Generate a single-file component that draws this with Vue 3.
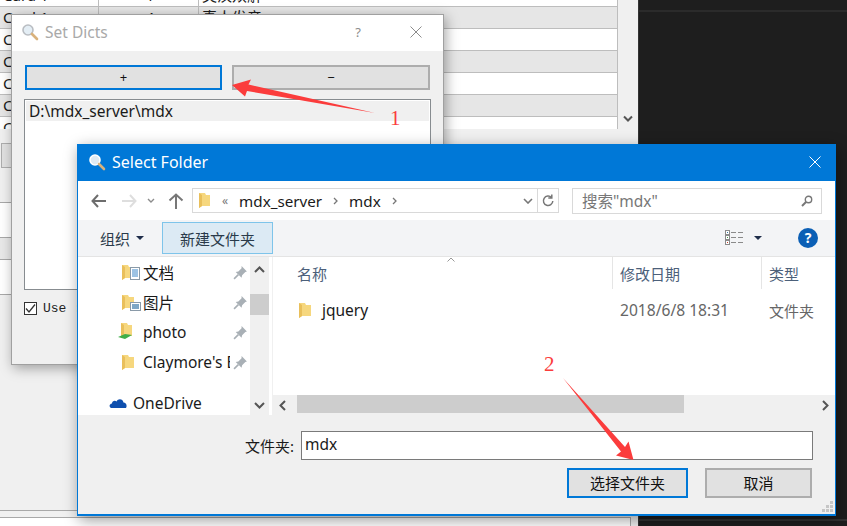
<template>
  <div class="desktop">
    <!-- app behind the dialogs -->
    <div class="app-panel">
      <div class="card-table">
        <div v-for="(row, i) in cardRows" :key="i" class="card-row">
          <span class="cell first">{{ row[0] }}</span>
          <span class="cell second">{{ row[1] }}</span>
          <span class="cell">{{ row[2] }}</span>
        </div>
        <div class="table-scroll">
          <svg class="scroll-down" width="10" height="7" viewBox="0 0 10 7"><path d="M1 1.5 5 5.5 9 1.5" fill="none" stroke="#555" stroke-width="2" /></svg>
        </div>
      </div>
      <div class="back-button"></div>
      <div class="back-list">
        <div class="back-row"></div>
        <div class="back-row grey"></div>
        <div class="back-row"></div>
      </div>
      <div class="back-footer">
        <div class="back-box"></div>
      </div>
    </div>
    <div class="dark-panel">
      <div class="dark-line top"></div>
      <div class="dark-line bottom"></div>
    </div>

    <!-- Set Dicts dialog -->
    <section class="dicts-window">
      <header class="dicts-title">
        <svg class="lens" width="18" height="18" viewBox="0 0 18 18">
          <circle cx="7" cy="7" r="5" fill="#e4eef5" stroke="#b9bdc2" stroke-width="1.6" />
          <path d="M11 11 16 16" stroke="#d9b27c" stroke-width="2.6" stroke-linecap="round" />
        </svg>
        <span class="dicts-name">Set Dicts</span>
        <span class="help-mark">?</span>
        <svg width="12" height="12" viewBox="0 0 12 12"><path d="M.5.5 11.5 11.5M11.5.5 .5 11.5" stroke="#8c8c8c" fill="none" /></svg>
      </header>
      <div class="dicts-body">
        <div class="dicts-buttons">
          <button class="flat-btn focused">+</button>
          <button class="flat-btn">−</button>
        </div>
        <div class="dicts-list">
          <div class="dicts-item">D:\mdx_server\mdx</div>
        </div>
        <div class="use-row">
          <span class="checkbox">
            <svg width="11" height="11" viewBox="0 0 11 11"><path d="M1 5.5 4 9 10 1.5" fill="none" stroke="#333" stroke-width="1.3" /></svg>
          </span>
          <span class="use-text">Use :</span>
        </div>
      </div>
    </section>

    <!-- Select Folder dialog -->
    <section class="folder-window">
      <header class="folder-title">
        <svg class="lens" width="18" height="18" viewBox="0 0 18 18">
          <circle cx="7" cy="7" r="5" fill="#dfeaf3" stroke="#fff" stroke-width="1.6" />
          <path d="M11 11 16 16" stroke="#d9b27c" stroke-width="2.6" stroke-linecap="round" />
        </svg>
        <span class="folder-name">Select Folder</span>
        <svg class="folder-close" width="12" height="12" viewBox="0 0 12 12"><path d="M.5.5 11.5 11.5M11.5.5 .5 11.5" stroke="#fff" fill="none" /></svg>
      </header>

      <div class="nav-row">
        <svg width="16" height="14" viewBox="0 0 16 14"><path d="M7 1 1.5 7 7 13M2 7H15" fill="none" stroke="#6d6d6d" stroke-width="2" /></svg>
        <svg class="nav-forward" width="16" height="14" viewBox="0 0 16 14"><path d="M9 1 14.5 7 9 13M14 7H1" fill="none" stroke="#dedede" stroke-width="2" /></svg>
        <svg class="nav-drop" width="8" height="5" viewBox="0 0 8 5"><path d="M1 1 4 4 7 1" fill="none" stroke="#8c8c8c" stroke-width="1.4" /></svg>
        <svg class="nav-up" width="16" height="16" viewBox="0 0 16 16"><path d="M1.5 7.5 8 1.5 14.5 7.5M8 2V16" fill="none" stroke="#777" stroke-width="2" /></svg>
        <div class="address">
          <svg class="folder-icon" width="13" height="17" viewBox="0 0 13 17"><path d="M1 1H7L8 3H12V14H4L1 16Z" fill="#f6d77e" /><path d="M1 1V16L4 14V3Z" fill="#e9bf5b" /></svg>
          <span class="crumb-more">«</span>
          <span class="crumb">mdx_server</span>
          <svg class="crumb-arrow" width="5" height="8" viewBox="0 0 5 8"><path d="M1 1 4 4 1 7" fill="none" stroke="#777" stroke-width="1.3" /></svg>
          <span class="crumb">mdx</span>
          <svg class="crumb-arrow" width="5" height="8" viewBox="0 0 5 8"><path d="M1 1 4 4 1 7" fill="none" stroke="#777" stroke-width="1.3" /></svg>
          <span class="spring"></span>
          <svg class="addr-drop" width="10" height="6" viewBox="0 0 10 6"><path d="M1 1 5 5 9 1" fill="none" stroke="#777" stroke-width="1.6" /></svg>
          <span class="refresh">
            <svg width="12" height="13" viewBox="0 0 12 13"><path d="M9.5 3.5A4.7 4.7 0 1 0 10.8 7M9.8 .5V4H6.3" fill="none" stroke="#777" stroke-width="1.5" /></svg>
          </span>
        </div>
        <div class="search">
          <span>搜索"mdx"</span>
          <svg width="12" height="12" viewBox="0 0 12 12"><circle cx="7.5" cy="4.5" r="3.2" fill="none" stroke="#777" stroke-width="1.4" /><path d="M5 7 1 11" stroke="#777" stroke-width="2" /></svg>
        </div>
      </div>

      <div class="tool-row">
        <span class="organize">组织</span>
        <span class="caret"></span>
        <span class="new-folder">新建文件夹</span>
        <span class="spring"></span>
        <svg class="view-icon" width="18" height="16" viewBox="0 0 18 16">
          <rect x=".5" y=".5" width="4" height="4" fill="#fff" stroke="#8a8a8a" />
          <rect x=".5" y="5.5" width="4" height="4" fill="#fff" stroke="#8a8a8a" />
          <rect x=".5" y="10.5" width="4" height="4" fill="#fff" stroke="#8a8a8a" />
          <rect x="2" y="2" width="1" height="1" fill="#3a7ca8" />
          <rect x="2" y="7" width="1" height="1" fill="#3f9a4b" />
          <rect x="2" y="12" width="1" height="1" fill="#c8402c" />
          <path d="M6 2.5H11M13 2.5H18M6 7.5H11M13 7.5H18M6 12.5H11M13 12.5H18" stroke="#8a8a8a" />
        </svg>
        <span class="caret view-caret"></span>
        <span class="help-circle">?</span>
      </div>

      <div class="browser">
        <div class="side-tree">
          <div v-for="item in sideItems" :key="item.name" class="side-item">
            <svg v-if="item.kind !== 'photo'" class="side-folder" width="14" height="17" viewBox="0 0 14 17"><path d="M1 1H7L8 3H13V14H4L1 16Z" fill="#f6d77e" /><path d="M1 1V16L4 14V3Z" fill="#e9bf5b" /></svg>
            <svg v-else class="side-folder shared" width="18" height="20" viewBox="0 0 18 20"><path d="M4 1H10L11 3H15V14H7L4 16Z" fill="#f6d77e" /><path d="M4 1V16L7 14V3Z" fill="#e9bf5b" /><path d="M1 15 8 12 15 13 8 17Z" fill="#3fae49" /></svg>
            <svg v-if="item.kind === 'docs'" class="overlay" width="10" height="13" viewBox="0 0 10 13"><rect x=".5" y=".5" width="9" height="12" fill="#fff" stroke="#8a9aa8" /><path d="M2 3H8M2 5H8M2 7H8M2 9H8" stroke="#3a86c8" /></svg>
            <svg v-if="item.kind === 'pics'" class="overlay pics" width="11" height="9" viewBox="0 0 11 9"><rect x=".5" y=".5" width="10" height="8" fill="#fff" stroke="#8a9aa8" /><rect x="2" y="2" width="7" height="5" fill="#7fa7c6" /></svg>
            <span class="side-label">{{ item.name }}</span>
            <svg class="pin" width="15" height="15" viewBox="0 0 14 14"><path d="M8 1 13 6 11.5 6.5 8.5 9.5 8 12 2.5 6.5 5 6 8 3Z" fill="#a9b0b6" /><path d="M5 9 1 13" stroke="#a9b0b6" stroke-width="1.5" /></svg>
          </div>
          <div class="side-onedrive">
            <svg width="18" height="12" viewBox="0 0 18 12"><path d="M2 11C0 10 0 7 3 6.5 3 4 6 3 7.5 4.5 9 1 14 1.5 14.5 5.5 17 5.5 18.5 8.5 17 11Z" fill="#0f4fae" /></svg>
            <span>OneDrive</span>
          </div>
        </div>
        <div class="side-scroll">
          <svg width="11" height="7" viewBox="0 0 11 7"><path d="M1 6 5.5 1.5 10 6" fill="none" stroke="#555" stroke-width="2" /></svg>
          <div class="side-thumb"></div>
          <span class="spring"></span>
          <svg width="11" height="7" viewBox="0 0 11 7"><path d="M1 1 5.5 5.5 10 1" fill="none" stroke="#555" stroke-width="2" /></svg>
        </div>
        <div class="file-pane">
          <div class="file-head">
            <span class="col-name">名称<svg class="sort-up" width="8" height="5" viewBox="0 0 8 5"><path d="M.5 4.5 4 1 7.5 4.5" fill="none" stroke="#999" /></svg></span>
            <span class="col-date">修改日期</span>
            <span class="col-type">类型</span>
          </div>
          <div class="file-row">
            <span class="col-name file-name">
              <svg width="14" height="17" viewBox="0 0 14 17"><path d="M1 1H7L8 3H13V14H4L1 16Z" fill="#f6d77e" /><path d="M1 1V16L4 14V3Z" fill="#e9bf5b" /></svg>
              jquery
            </span>
            <span class="col-date muted">2018/6/8 18:31</span>
            <span class="col-type muted">文件夹</span>
          </div>
          <span class="spring"></span>
          <div class="h-scroll">
            <svg width="7" height="11" viewBox="0 0 7 11"><path d="M6 1 1.5 5.5 6 10" fill="none" stroke="#555" stroke-width="2" /></svg>
            <div class="h-thumb"></div>
            <span class="spring"></span>
            <svg width="7" height="11" viewBox="0 0 7 11"><path d="M1 1 5.5 5.5 1 10" fill="none" stroke="#555" stroke-width="2" /></svg>
          </div>
        </div>
      </div>

      <footer class="folder-footer">
        <div class="name-row">
          <label>文件夹:</label>
          <div class="name-input">mdx</div>
        </div>
        <div class="action-row">
          <button class="flat-btn focused choose">选择文件夹</button>
          <button class="flat-btn cancel">取消</button>
        </div>
        <svg class="grip" width="11" height="11" viewBox="0 0 11 11">
          <path d="M8 0h3v3H8zM4 4h3v3H4zM8 4h3v3H8zM0 8h3v3H0zM4 8h3v3H4zM8 8h3v3H8z" fill="#c6c6c6" />
        </svg>
      </footer>
    </section>

    <!-- red annotations -->
    <svg class="marks" width="847" height="526" viewBox="0 0 847 526">
      <path d="M232 85 251 79.5 248.5 84.5 375 113 247 91 245 96.5Z" fill="#fb3c3c" />
      <path d="M563 378 625 447 628.5 441.5 633.5 460 616 455.5 621 451.5Z" fill="#fb3c3c" />
      <text x="390" y="125" class="mark-num">1</text>
      <text x="544" y="371" class="mark-num">2</text>
    </svg>
  </div>
</template>

<script setup>
const cardRows = [
  ['Card 1', '1', '英汉双解'],
  ['Card 1', '4', '真人发音'],
  ['Card', '', ''],
  ['Card', '', ''],
  ['Card', '', ''],
  ['Card', '', ''],
  ['Card', '', '']
]

const sideItems = [
  { name: '文档', kind: 'docs' },
  { name: '图片', kind: 'pics' },
  { name: 'photo', kind: 'photo' },
  { name: "Claymore's Blade", kind: 'plain' }
]
</script>

<style>
html,
body {
  margin: 0;
  overflow: hidden;
  background: #1e1e1e;
}
</style>

<style scoped>
.desktop {
  position: relative;
  display: flex;
  width: 847px;
  height: 526px;
  overflow: hidden;
  font-family: "Noto Sans", "Noto Sans CJK SC", sans-serif;
  font-size: 15px;
  color: #1a1a1a;
}

.spring {
  flex: 1;
}

.app-panel {
  width: 638px;
  height: 526px;
  flex: none;
  background: #f0f0f0;
  border-right: 1px solid #333;
  overflow: hidden;
}

.dark-panel {
  flex: 1;
  background: #1e1e1e;
  padding-top: 10px;
}

.dark-line {
  height: 2px;
  background: #2b2b2b;
}

.dark-line.bottom {
  margin-top: 507px;
  background: #333;
}

.card-table {
  position: relative;
  width: 638px;
  height: 129px;
  overflow: hidden;
  background: #fff;
}

.card-row {
  display: flex;
  width: 617px;
  height: 21px;
  line-height: 21px;
  border-bottom: 1px solid #bdbdbd;
  border-right: 1px solid #bdbdbd;
  font-size: 15px;
}

.card-row:first-child {
  margin-top: -15px;
}

.card-row:nth-child(even) {
  background: #e6e6e6;
}

.cell {
  padding-left: 3px;
  white-space: nowrap;
  flex: 1;
}

.cell.first {
  width: 95px;
  flex: none;
  border-right: 1px solid #bdbdbd;
}

.cell.second {
  width: 96px;
  flex: none;
  text-align: center;
  border-right: 1px solid #bdbdbd;
}

.table-scroll {
  position: absolute;
  top: 0;
  right: 0;
  width: 20px;
  height: 129px;
  background: #f0f0f0;
}

.scroll-down {
  position: absolute;
  left: 5px;
  top: 115px;
}

.back-button {
  width: 9px;
  height: 23px;
  margin: 14px 0 0 1px;
  background: #e1e1e1;
  border: 1px solid #adadad;
}

.back-list {
  margin-top: 34px;
  border-top: 1px solid #a8a8a8;
}

.back-row {
  height: 34px;
  border-bottom: 1px solid #a8a8a8;
  background: #fff;
}

.back-row.grey {
  height: 21px;
  background: #e8e8e8;
}

.back-footer {
  margin-top: 215px;
  border-top: 1px solid #a8a8a8;
  padding-top: 6px;
}

.back-box {
  width: 631px;
  height: 20px;
  box-sizing: border-box;
  background: #fff;
  border-top: 1px solid #a8a8a8;
  border-right: 1px solid #a8a8a8;
}

.dicts-window {
  position: absolute;
  left: 11px;
  top: 14px;
  width: 433px;
  height: 351px;
  box-sizing: border-box;
  display: flex;
  flex-direction: column;
  background: #f0f0f0;
  border: 1px solid #a0a0a0;
  box-shadow: 2px 3px 12px rgba(0, 0, 0, 0.35);
}

.dicts-title {
  height: 36px;
  flex: none;
  box-sizing: border-box;
  padding: 0 21px 2px 9px;
  display: flex;
  align-items: center;
  background: #fff;
  color: #a9a9a9;
}

.lens {
  flex: none;
}

.dicts-name {
  margin-left: 6px;
  font-size: 15.5px;
  flex: 1;
}

.help-mark {
  margin-right: 49px;
  font-size: 13px;
  color: #8c8c8c;
}

.dicts-body {
  flex: 1;
  padding: 14px 12px 0 13px;
}

.dicts-buttons {
  display: flex;
  gap: 10px;
}

.flat-btn {
  width: 198px;
  height: 25px;
  padding: 0;
  box-sizing: border-box;
  background: #e1e1e1;
  border: 2px solid #adadad;
  border-radius: 0;
  font-family: inherit;
  font-size: 13px;
  color: #111;
  line-height: 1;
}

.dicts-buttons .flat-btn:first-child {
  width: 197px;
}

.flat-btn.focused {
  border-color: #0078d7;
}

.dicts-list {
  margin: 9px 0 0 -1px;
  height: 191px;
  box-sizing: border-box;
  padding: 1px;
  background: #fff;
  border: 1px solid #878c90;
  width: 407px;
}

.dicts-item {
  height: 20px;
  line-height: 20px;
  padding-left: 3px;
  background: #f0f0f0;
  font-size: 15.5px;
  color: #1a1a1a;
}

.use-row {
  display: flex;
  align-items: center;
  gap: 6px;
  margin: 11px 0 0 -1px;
}

.checkbox {
  width: 11px;
  height: 11px;
  display: flex;
  border: 1px solid #333;
  background: #fff;
}

.use-text {
  font-family: "Liberation Mono", monospace;
  font-size: 13px;
  white-space: pre;
  color: #222;
}

.folder-window {
  position: absolute;
  left: 77px;
  top: 144px;
  width: 759px;
  height: 372px;
  box-sizing: border-box;
  display: flex;
  flex-direction: column;
  background: #f0f0f0;
  border: 1px solid #0078d7;
  border-top: 0;
  border-bottom-width: 2px;
  box-shadow: 2px 4px 14px rgba(0, 0, 0, 0.4);
}

.folder-title {
  height: 37px;
  flex: none;
  box-sizing: border-box;
  display: flex;
  align-items: center;
  padding: 0 14px 1px 10px;
  background: #0078d7;
  color: #fff;
}

.folder-name {
  margin-left: 6px;
  flex: 1;
  font-size: 16px;
}

.nav-row {
  height: 39px;
  flex: none;
  display: flex;
  align-items: center;
  padding: 0 12px 0 13px;
  background: #fff;
}

.nav-forward {
  margin-left: 14px;
}

.nav-drop {
  margin-left: 10px;
}

.nav-up {
  margin-left: 13px;
}

.address {
  margin-left: 8px;
  width: 367px;
  height: 25px;
  box-sizing: border-box;
  display: flex;
  align-items: center;
  border: 1px solid #d9d9d9;
  padding-left: 5px;
}

.crumb-more {
  margin: 0 11px 0 11px;
  color: #777;
  font-size: 12px;
}

.crumb {
  font-size: 15.2px;
}

.crumb-arrow {
  margin: 0 11px;
}

.addr-drop {
  margin-right: 4px;
}

.refresh {
  width: 20px;
  height: 23px;
  border-left: 1px solid #d9d9d9;
  display: flex;
  align-items: center;
  justify-content: center;
}

.search {
  margin-left: 13px;
  width: 250px;
  height: 26px;
  box-sizing: border-box;
  display: flex;
  align-items: center;
  justify-content: space-between;
  padding: 0 8px 0 9px;
  border: 1px solid #d9d9d9;
  font-size: 15.5px;
  color: #777;
}

.tool-row {
  height: 37px;
  flex: none;
  box-sizing: border-box;
  display: flex;
  align-items: center;
  padding: 0 17px 0 22px;
  background: #f3f4f6;
  border-bottom: 1px solid #e4e4e4;
}

.organize {
  color: #2a3a4a;
}

.caret {
  margin-left: 6px;
  border-left: 4px solid transparent;
  border-right: 4px solid transparent;
  border-top: 4px solid #1f2d4a;
}

.new-folder {
  margin-left: 18px;
  width: 111px;
  height: 32px;
  box-sizing: border-box;
  display: flex;
  align-items: center;
  justify-content: center;
  background: #dceaf4;
  border: 1px solid #7ec4ea;
  color: #2a3a4a;
}

.view-icon {
  margin-right: 11px;
}

.view-caret {
  margin: 0 36px 0 0;
}

.help-circle {
  width: 20px;
  height: 20px;
  border-radius: 50%;
  background: #0b5fb5;
  color: #fff;
  font-weight: 700;
  font-size: 14px;
  line-height: 20px;
  text-align: center;
}

.browser {
  height: 158px;
  flex: none;
  display: flex;
  background: #fff;
}

.side-tree {
  width: 172px;
  flex: none;
  overflow: hidden;
}

.side-item {
  position: relative;
  height: 30px;
  display: flex;
  align-items: center;
  padding-left: 43px;
}

.side-folder {
  flex: none;
}

.side-folder.shared {
  margin-left: -4px;
}

.overlay {
  position: absolute;
  left: 52px;
  top: 10px;
}

.overlay.pics {
  top: 15px;
}

.side-label {
  width: 87px;
  margin-left: 8px;
  overflow: hidden;
  white-space: nowrap;
  font-size: 15.5px;
}

.pin {
  margin-left: 3px;
  flex: none;
}

.side-onedrive {
  display: flex;
  align-items: center;
  gap: 6px;
  margin-top: 15px;
  padding-left: 31px;
  font-size: 15.5px;
}

.side-scroll {
  width: 19px;
  flex: none;
  display: flex;
  flex-direction: column;
  align-items: center;
  padding: 9px 0 6px;
  box-sizing: border-box;
  background: #f0f0f0;
}

.side-thumb {
  width: 19px;
  height: 21px;
  margin-top: 21px;
  background: #cdcdcd;
}

.file-pane {
  flex: 1;
  min-width: 0;
  display: flex;
  flex-direction: column;
  margin-left: 3px;
  border-left: 1px solid #f0f0f0;
}

.file-head,
.file-row {
  display: flex;
  flex: none;
}

.file-head {
  height: 32px;
  align-items: stretch;
  color: #4c607a;
}

.file-head span {
  display: flex;
  align-items: center;
}

.col-name {
  position: relative;
  width: 339px;
  box-sizing: border-box;
  padding-left: 24px;
  flex: none;
}

.col-date {
  width: 149px;
  box-sizing: border-box;
  padding-left: 7px;
  flex: none;
}

.col-type {
  padding-left: 7px;
  flex: 1;
}

.file-head .col-date,
.file-head .col-type {
  border-left: 1px solid #e5e5e5;
}

.sort-up {
  position: absolute;
  left: 174px;
  top: 0;
}

.file-row {
  height: 24px;
  margin-top: 9px;
  align-items: center;
  font-size: 15.5px;
}

.file-name {
  display: flex;
  align-items: center;
  gap: 10px;
  padding-left: 25px;
}

.muted {
  color: #666;
}

.file-row .col-date {
  padding-left: 8px;
  font-size: 15.6px;
}

.file-row .col-type {
  padding-left: 8px;
  font-size: 15px;
}

.h-scroll {
  height: 20px;
  flex: none;
  display: flex;
  align-items: center;
  padding: 0 6px;
  background: #f0f0f0;
}

.h-thumb {
  width: 387px;
  height: 18px;
  margin-left: 11px;
  align-self: flex-start;
  background: #cdcdcd;
}

.folder-footer {
  position: relative;
  flex: 1;
  padding: 16px 22px 0 0;
}

.name-row {
  display: flex;
  align-items: center;
  justify-content: flex-end;
}

.name-row label {
  margin-right: 7px;
}

.name-input {
  width: 512px;
  height: 29px;
  line-height: 25px;
  box-sizing: border-box;
  padding-left: 3px;
  background: #fff;
  border: 1px solid #7a7a7a;
  font-size: 15.5px;
}

.action-row {
  display: flex;
  justify-content: flex-end;
  gap: 17px;
  margin: 8px 1px 0 0;
}

.choose {
  width: 121px;
  height: 30px;
  font-size: 15px;
}

.cancel {
  width: 107px;
  height: 30px;
  font-size: 15px;
}

.grip {
  position: absolute;
  right: 2px;
  bottom: 2px;
}

.marks {
  position: absolute;
  left: 0;
  top: 0;
  pointer-events: none;
}

.mark-num {
  font-family: "Liberation Serif", serif;
  font-size: 21px;
  fill: #fb3c3c;
}
</style>
